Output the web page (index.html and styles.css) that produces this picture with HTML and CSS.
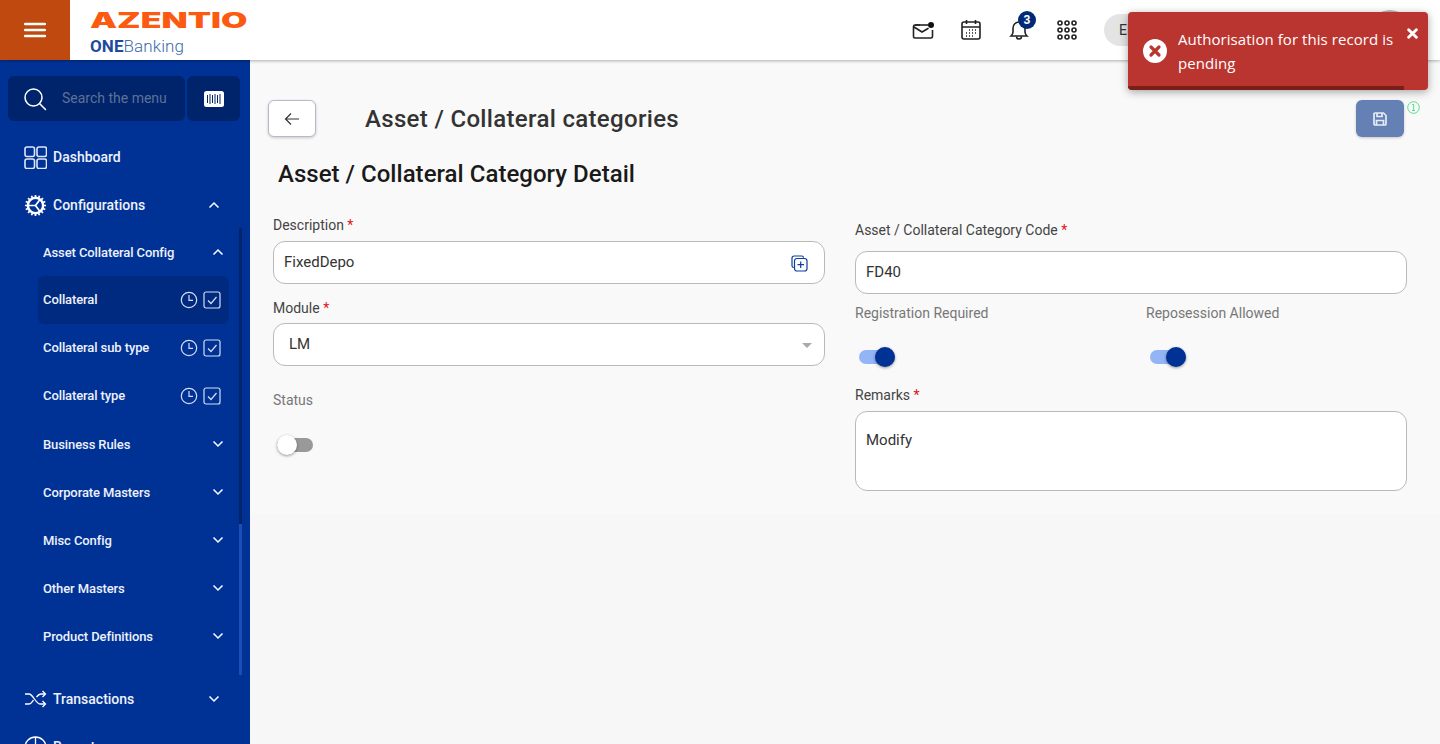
FILE: index.html
```html
<!DOCTYPE html>
<html lang="en">
<head>
  <meta charset="UTF-8" />
  <title>Asset / Collateral categories</title>
  <link rel="stylesheet" href="styles.css">
</head>
<body>

  <!-- Top bar -->
  <header class="topbar">
    <div class="burger">
      <svg width="22" height="16" viewBox="0 0 22 16"><path d="M1 2h20M1 8h20M1 14h20" stroke="#fff" stroke-width="2.4" stroke-linecap="round"/></svg>
    </div>
    <div class="logo">
      <div class="logo-main">AZENTIO</div>
      <div class="logo-sub"><b>ONE</b>Banking</div>
    </div>
    <div class="top-icons">
      <svg class="top-icon" width="24" height="24" viewBox="0 0 24 24" fill="none" stroke="#222" stroke-width="1.6"><path d="M9 6H4a1.5 1.5 0 0 0-1.5 1.500v10A1.500 1.500 0 0 0 4 19h16a1.500 1.500 0 0 0 1.500-1.500V11"/><path d="M3 8l8 5 6-3.500" stroke-linecap="round"/><path d="M4 6h13"/><circle cx="20" cy="6" r="3" fill="#111" stroke="none"/></svg>
      <svg class="top-icon" width="24" height="24" viewBox="0 0 24 24" fill="none" stroke="#222" stroke-width="1.6"><rect x="3" y="4" width="18" height="17" rx="2"/><path d="M3 9h18M7.500 2v4M16.500 2v4"/><path d="M10 12h1M13 12h1M16 12h1M7 15h1M10 15h1M13 15h1M16 15h1M7 18h1M10 18h1M13 18h1" stroke-width="1.600"/></svg>
      <div class="bell-wrap">
        <svg class="top-icon" width="24" height="24" viewBox="0 0 24 24" fill="none" stroke="#222" stroke-width="1.6"><path d="M12 4a6 6 0 0 0-6 6v4c0 2-1 3-2 4h16c-1-1-2-2-2-4v-4a6 6 0 0 0-6-6z"/><path d="M9.500 18.500a2.500 2.500 0 0 0 5 0"/></svg>
        <span class="badge">3</span>
      </div>
      <svg class="top-icon" width="24" height="24" viewBox="0 0 24 24" fill="none" stroke="#222" stroke-width="1.600"><circle cx="5" cy="5" r="2"/><circle cx="12" cy="5" r="2"/><circle cx="19" cy="5" r="2"/><circle cx="5" cy="12" r="2"/><circle cx="12" cy="12" r="2"/><circle cx="19" cy="12" r="2"/><circle cx="5" cy="19" r="2"/><circle cx="12" cy="19" r="2"/><circle cx="19" cy="19" r="2"/></svg>
      <div class="lang">EN</div>
      <div class="avatar"></div>
    </div>
  </header>

  <div class="shell">
    <!-- Side menu -->
    <aside class="sidebar">
      <div class="search-row">
        <div class="search-box">
          <svg width="24" height="24" viewBox="0 0 24 24" fill="none" stroke="#fff" stroke-width="1.500"><circle cx="10.500" cy="10.500" r="8.500"/><path d="M16.500 16.500l6 6" stroke-linecap="round"/></svg>
          <span>Search the menu</span>
        </div>
        <div class="scan-box">
          <svg width="20" height="16" viewBox="0 0 20 16"><rect width="20" height="16" rx="2.500" fill="#fff"/><path d="M3.500 4v8M6 3v10M8.500 4v8M11 3v10M13.500 4v8M16 3v10" stroke="#00246b" stroke-width="1"/></svg>
        </div>
      </div>

      <div class="nav-item">
        <svg width="23" height="23" viewBox="0 0 23 23" fill="none" stroke="#dfe6f5" stroke-width="1.600"><rect x="1" y="1" width="9.500" height="9.500" rx="2"/><rect x="13" y="1" width="9.500" height="9.500" rx="2"/><rect x="1" y="13" width="9.500" height="9.500" rx="2"/><rect x="13" y="13" width="9.500" height="9.500" rx="2"/></svg>
        <span>Dashboard</span>
      </div>
      <div class="nav-item">
        <svg width="23" height="23" viewBox="0 0 24 24" fill="none" stroke="#fff"><circle cx="12" cy="12" r="8" stroke-width="2.600"/><path d="M12 12H4.500M12 12l4.500-6M12 12l4.500 6" stroke-width="1.800"/><path d="M12 1v2.500M12 20.500V23M1 12h2.500M20.500 12H23M4.200 4.200l1.800 1.800M18 18l1.800 1.800M19.800 4.200L18 6M6 18l-1.800 1.800M7.800 1.800l1 2.300M15.200 19.900l1 2.300M16.200 1.800l-1 2.300M8.800 19.900l-1 2.300M1.800 7.800l2.300 1M19.900 15.200l2.300 1M22.200 7.800l-2.300 1M4.100 15.200l-2.300 1" stroke-width="1.800"/></svg>
        <span>Configurations</span>
        <svg class="chev" width="12" height="8" viewBox="0 0 12 8" fill="none" stroke="#fff" stroke-width="1.500"><path d="M1.500 6.500L6 2l4.500 4.500"/></svg>
      </div>

      <div class="sub-nav">
        <div class="sub-item">
          <span>Asset Collateral Config</span>
          <svg class="chev" width="12" height="8" viewBox="0 0 12 8" fill="none" stroke="#fff" stroke-width="1.500"><path d="M1.500 6.500L6 2l4.500 4.500"/></svg>
        </div>
        <div class="sub-item leaf active">
          <span>Collateral</span>
          <svg width="18" height="18" viewBox="0 0 18 18" fill="none" stroke="#d5def0" stroke-width="1.200"><circle cx="9" cy="9" r="7.700"/><path d="M9 4v5.300h4"/></svg>
          <svg width="18" height="18" viewBox="0 0 18 18" fill="none" stroke="#d5def0" stroke-width="1.200"><rect x="1" y="1" width="16" height="16" rx="2"/><path d="M5 9.500l3 3 5.500-6.500"/></svg>
        </div>
        <div class="sub-item leaf">
          <span>Collateral sub type</span>
          <svg width="18" height="18" viewBox="0 0 18 18" fill="none" stroke="#d5def0" stroke-width="1.200"><circle cx="9" cy="9" r="7.700"/><path d="M9 4v5.300h4"/></svg>
          <svg width="18" height="18" viewBox="0 0 18 18" fill="none" stroke="#d5def0" stroke-width="1.200"><rect x="1" y="1" width="16" height="16" rx="2"/><path d="M5 9.500l3 3 5.500-6.500"/></svg>
        </div>
        <div class="sub-item leaf">
          <span>Collateral type</span>
          <svg width="18" height="18" viewBox="0 0 18 18" fill="none" stroke="#d5def0" stroke-width="1.200"><circle cx="9" cy="9" r="7.700"/><path d="M9 4v5.300h4"/></svg>
          <svg width="18" height="18" viewBox="0 0 18 18" fill="none" stroke="#d5def0" stroke-width="1.200"><rect x="1" y="1" width="16" height="16" rx="2"/><path d="M5 9.500l3 3 5.500-6.500"/></svg>
        </div>
        <div class="sub-item">
          <span>Business Rules</span>
          <svg class="chev" width="12" height="8" viewBox="0 0 12 8" fill="none" stroke="#fff" stroke-width="1.500"><path d="M1.500 1.500L6 6l4.500-4.500"/></svg>
        </div>
        <div class="sub-item">
          <span>Corporate Masters</span>
          <svg class="chev" width="12" height="8" viewBox="0 0 12 8" fill="none" stroke="#fff" stroke-width="1.500"><path d="M1.500 1.500L6 6l4.500-4.500"/></svg>
        </div>
        <div class="sub-item">
          <span>Misc Config</span>
          <svg class="chev" width="12" height="8" viewBox="0 0 12 8" fill="none" stroke="#fff" stroke-width="1.500"><path d="M1.500 1.500L6 6l4.500-4.500"/></svg>
        </div>
        <div class="sub-item">
          <span>Other Masters</span>
          <svg class="chev" width="12" height="8" viewBox="0 0 12 8" fill="none" stroke="#fff" stroke-width="1.500"><path d="M1.500 1.500L6 6l4.500-4.500"/></svg>
        </div>
        <div class="sub-item">
          <span>Product Definitions</span>
          <svg class="chev" width="12" height="8" viewBox="0 0 12 8" fill="none" stroke="#fff" stroke-width="1.500"><path d="M1.500 1.500L6 6l4.500-4.500"/></svg>
        </div>
        <div class="scroll-track"><div class="scroll-thumb"></div></div>
      </div>

      <div class="nav-item">
        <svg width="23" height="18" viewBox="0 0 23 18" fill="none" stroke="#fff" stroke-width="1.300"><path d="M1 4h4c4 0 7 10 11 10h5M1 14h4c2 0 3-2 4.500-4M12.500 7C14 5 15 4 17 4h4"/><path d="M18.500 1l3 3-3 3M18.500 11l3 3-3 3"/></svg>
        <span>Transactions</span>
        <svg class="chev" width="12" height="8" viewBox="0 0 12 8" fill="none" stroke="#fff" stroke-width="1.500"><path d="M1.500 1.500L6 6l4.500-4.500"/></svg>
      </div>
      <div class="nav-item">
        <svg width="23" height="23" viewBox="0 0 23 23" fill="none" stroke="#fff" stroke-width="1.300"><circle cx="11.500" cy="11.500" r="10.500"/><path d="M11.500 1v10.500H22M11.500 11.500L4 19"/></svg>
        <span>Reports</span>
        <svg class="chev" width="12" height="8" viewBox="0 0 12 8" fill="none" stroke="#fff" stroke-width="1.500"><path d="M1.500 1.500L6 6l4.500-4.500"/></svg>
      </div>
    </aside>

    <!-- Detail form -->
    <main class="content">
      <div class="panel">
        <div class="page-head">
          <button class="back-btn">
            <svg width="16" height="14" viewBox="0 0 16 14" fill="none" stroke="#333" stroke-width="1.200"><path d="M15 7H1.500M7 1.500L1.500 7 7 12.500"/></svg>
          </button>
          <h1>Asset / Collateral categories</h1>
          <button class="save-btn">
            <svg width="16" height="16" viewBox="0 0 16 16" fill="none" stroke="#e6ebf5" stroke-width="1.700"><path d="M2 3a1 1 0 0 1 1-1h8.500L14 4.500V13a1 1 0 0 1-1 1H3a1 1 0 0 1-1-1z"/><path d="M5 2v3.500h5V2M4.500 14V9.500h7V14"/></svg>
          </button>
          <svg class="info-icon" width="13" height="13" viewBox="0 0 13 13" fill="none" stroke="#55dd88" stroke-width="1"><circle cx="6.500" cy="6.500" r="5.800"/><path d="M5.200 3.500h1.500v6M5 9.500h3"/></svg>
        </div>

        <h2>Asset / Collateral Category Detail</h2>

        <div class="form-grid">
          <div class="col-left">
            <label class="field-label">Description <em>*</em></label>
            <div class="input">
              <span>FixedDepo</span>
              <svg class="input-icon" width="17" height="17" viewBox="0 0 17 17" fill="none" stroke="#0b3ea3" stroke-width="1.200"><path d="M2.800 12.500A1.800 1.800 0 0 1 1 10.700V3a2 2 0 0 1 2-2h7.700a1.800 1.800 0 0 1 1.800 1.800"/><rect x="3.500" y="3.500" width="12.500" height="12.500" rx="2.500"/><path d="M9.700 6.500v6.500M6.500 9.700H13"/></svg>
            </div>
            <label class="field-label module-label">Module <em>*</em></label>
            <div class="input select">
              <span>LM</span>
              <i class="caret"></i>
            </div>
            <label class="field-label muted status-label">Status</label>
            <div class="switch off"><i></i></div>
          </div>

          <div class="col-right">
            <label class="field-label">Asset / Collateral Category Code <em>*</em></label>
            <div class="input"><span>FD40</span></div>
            <div class="toggle-row">
              <div class="toggle-cell">
                <label class="field-label muted">Registration Required</label>
                <div class="switch on"><i></i></div>
              </div>
              <div class="toggle-cell">
                <label class="field-label muted">Reposession Allowed</label>
                <div class="switch on"><i></i></div>
              </div>
            </div>
            <label class="field-label remarks-label">Remarks <em>*</em></label>
            <div class="input area"><span>Modify</span></div>
          </div>
        </div>
      </div>
    </main>
  </div>

  <!-- Toast -->
  <div class="toast">
    <svg class="toast-icon" width="24" height="24" viewBox="0 0 24 24"><circle cx="12" cy="12" r="12" fill="#fff"/><path d="M8 8l8 8M16 8l-8 8" stroke="#bb3530" stroke-width="3.200" stroke-linecap="round"/></svg>
    <div class="toast-text">Authorisation for this record is pending</div>
    <svg class="toast-close" width="11" height="11" viewBox="0 0 10 10"><path d="M1.500 1.500l7 7M8.500 1.500l-7 7" stroke="#fff" stroke-width="2.600" stroke-linecap="round"/></svg>
    <div class="toast-bar"></div>
  </div>

</body>
</html>
```

FILE: styles.css
```css
* { box-sizing: border-box; }
html, body { height: 100%; }
body { margin: 0; height: 744px; overflow: hidden; background: #f7f7f7; font-family: Roboto, "Liberation Sans", sans-serif; color: #222; display: flex; flex-direction: column; }

/* top bar */
.topbar { height: 60px; flex: none; display: flex; align-items: center; background: #fff; box-shadow: 0 1px 3px rgba(0,0,0,.3); position: relative; z-index: 2; }
.burger { width: 70px; height: 60px; background: #c0490f; display: flex; align-items: center; justify-content: center; }
.logo { margin-left: 20px; width: 160px; padding-top: 5px; }
.logo-main { font-family: Inter, sans-serif; font-weight: 900; font-size: 21px; line-height: 22px; color: #fb5a10; transform: scaleX(1.62); transform-origin: left center; }
.logo-sub { font-size: 17px; line-height: 20px; margin-top: 4px; color: #3b6aae; font-weight: 300; letter-spacing: .1px; }
.logo-sub b { color: #1d4a9f; font-weight: 700; }
.top-icons { margin-left: auto; display: flex; align-items: center; height: 60px; padding-right: 30px; }
.top-icon { display: block; }
.top-icons > .top-icon, .bell-wrap { margin-right: 24px; }
.top-icons > svg:nth-child(1) { margin-top: 2px; }
.bell-wrap { position: relative; }
.badge { position: absolute; top: -7px; left: 11px; width: 18px; height: 18px; border-radius: 50%; background: #002a78; color: #fff; font-size: 12px; font-weight: 700; line-height: 18px; text-align: center; }
.lang { width: 70px; height: 32px; background: #e4e4e4; border-radius: 16px; padding-left: 15px; font-size: 14px; line-height: 32px; color: #333; margin-left: 1px; }
.avatar { width: 40px; height: 40px; border-radius: 50%; background: #bbb; margin-left: 196px; }

.shell { flex: 1; display: flex; min-height: 0; }

/* side menu */
.sidebar { width: 250px; flex: none; background: #003296; overflow: hidden; color: #eef1f9; }
.search-row { display: flex; gap: 2px; margin: 16px 10px 12px 8px; height: 45px; }
.search-box { width: 177px; background: #00246b; border-radius: 6px; display: flex; align-items: center; padding-left: 15px; }
.search-box span { margin-left: 15px; padding-bottom: 2px; font-size: 14px; color: #5e7196; white-space: nowrap; }
.scan-box { width: 53px; background: #00246b; border-radius: 6px; display: flex; align-items: center; justify-content: center; }
.nav-item { height: 48px; display: flex; align-items: center; padding-left: 24px; padding-right: 30px; font-size: 14px; font-weight: 500; }
.nav-item > svg:first-child { width: 23px; flex: none; }
.nav-item span { margin-left: 6px; flex: 1; }
.sub-nav { position: relative; margin-top: -1px; padding: 0 0 15px 38px; }
.sub-item { height: 48px; width: 191px; display: flex; align-items: center; padding: 0 9px 0 5px; font-size: 13px; font-weight: 500; letter-spacing: -.1px; border-radius: 6px; }
.sub-item span { flex: 1; white-space: nowrap; }
.sub-item.leaf { padding-right: 8px; }
.sub-item.leaf span { padding-bottom: 2px; }
.sub-item.leaf svg { margin-left: 5px; }
.sub-item.active { background: #002a80; }
.sub-item .chev { margin-right: -4px; }
.scroll-track { position: absolute; top: 0; bottom: 0; left: 239px; width: 3px; background: #00246b; }
.scroll-thumb { position: absolute; left: 0; right: 0; top: 296px; bottom: 0; background: #1c4fb5; }

/* content */
.content { flex: 1; min-width: 0; }
.panel { height: 455px; background: #f9f9f9; padding: 40px 0 0 18px; }
.page-head { display: flex; align-items: center; height: 37px; position: relative; padding-right: 36px; }
.back-btn { width: 48px; height: 37px; background: #fff; border: 1px solid #b5bbcc; border-radius: 6px; box-shadow: 0 1px 3px rgba(0,0,0,.2); display: flex; align-items: center; justify-content: center; padding: 0; }
h1 { margin: 0 0 0 49px; flex: 1; font-size: 24px; font-weight: 500; letter-spacing: .33px; color: #333; }
.save-btn { width: 48px; height: 37px; background: #6480b5; border: 0; border-radius: 6px; box-shadow: 0 1px 3px rgba(0,0,0,.2); display: flex; align-items: center; justify-content: center; padding: 0; }
.info-icon { position: absolute; right: 20px; top: 1px; }
h2 { margin: 21px 0 0 10px; font-size: 24px; line-height: 32px; font-weight: 500; letter-spacing: .03px; color: #1a1a1a; }
.form-grid { display: grid; grid-template-columns: 552px 552px; column-gap: 30px; margin: 26px 0 0 5px; }
.field-label { display: block; font-size: 14px; line-height: 18px; color: #444; }
.field-label em { color: #e01515; font-style: normal; }
.field-label.muted { color: #777; }
.input { height: 43px; background: #fff; border: 1px solid #b9b9b9; border-radius: 12px; display: flex; align-items: center; padding: 0 10px 2px; font-size: 15px; color: #333; margin-top: 7px; }
.input span { flex: 1; }
.input-icon { margin: 3px 6px 0 0; }
.select { padding-left: 15px; }
.caret { width: 0; height: 0; border-left: 5px solid transparent; border-right: 5px solid transparent; border-top: 5px solid #aaa; margin-right: 2px; margin-top: 4px; }
.area { height: 80px; align-items: flex-start; padding-top: 19px; }
.module-label { margin-top: 15px; }
.module-label + .input { margin-top: 6px; }
.status-label { margin-top: 25px; }
.col-right { padding-top: 5px; }
.col-right > .input { margin-top: 12px; }
.col-right > .area { margin-top: 7px; }
.toggle-row { display: flex; margin-top: 10px; }
.toggle-cell { width: 291px; flex: none; }
.remarks-label { margin-top: 22px; }

/* switches */
.switch { width: 36px; height: 14px; border-radius: 7px; position: relative; margin: 29px 0 0 4px; }
.switch i { position: absolute; top: -3px; width: 20px; height: 20px; border-radius: 50%; box-shadow: 0 1px 3px rgba(0,0,0,.4); }
.switch.on { background: #93b5f5; }
.switch.on i { right: 0; background: #003296; }
.switch.off { background: #999; }
.switch.off i { left: 0; background: #fff; }
.toggle-cell .switch { margin-top: 28px; }

/* toast */
.toast { position: absolute; left: 1128px; top: 12px; width: 300px; height: 78px; background: #bb3530; border-radius: 4px; box-shadow: 0 2px 8px rgba(0,0,0,.35); color: #fff; z-index: 5; overflow: hidden; display: flex; padding: 15px 10px 0 15px; }
.toast-icon { margin: 12px 11px 0 0; flex: none; }
.toast-text { flex: 1; font-family: "Open Sans", sans-serif; font-size: 15px; line-height: 24px; letter-spacing: .06px; }
.toast-close { margin: 1px 0 0 0; flex: none; }
.toast-bar { position: absolute; left: 0; bottom: 0; width: 276px; height: 4px; background: #7a1e18; }
```
